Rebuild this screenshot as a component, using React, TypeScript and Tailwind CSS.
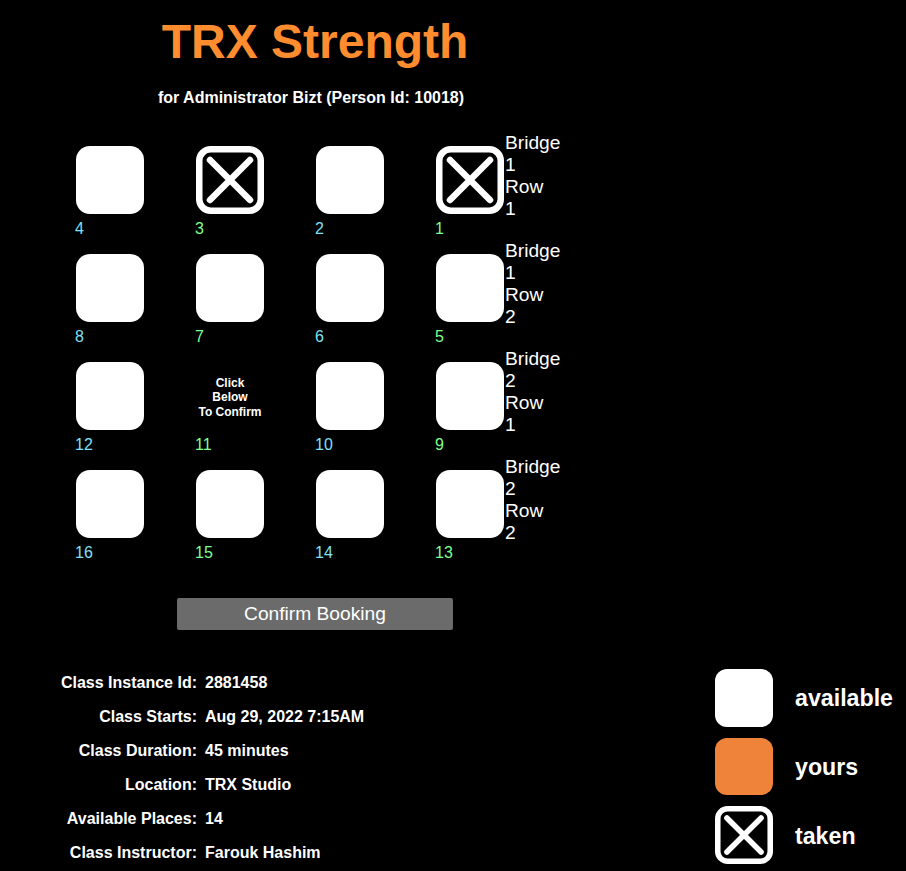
const rows = [
  { label: ["Bridge", "1", "Row", "1"], seats: [4, 3, 2, 1] },
  { label: ["Bridge", "1", "Row", "2"], seats: [8, 7, 6, 5] },
  { label: ["Bridge", "2", "Row", "1"], seats: [12, 11, 10, 9] },
  { label: ["Bridge", "2", "Row", "2"], seats: [16, 15, 14, 13] },
];

const taken = [3, 1];
const selected = 11;

const details = [
  ["Class Instance Id:", "2881458"],
  ["Class Starts:", "Aug 29, 2022 7:15AM"],
  ["Class Duration:", "45 minutes"],
  ["Location:", "TRX Studio"],
  ["Available Places:", "14"],
  ["Class Instructor:", "Farouk Hashim"],
];

function TakenBox({ size }: { size: number }) {
  return (
    <svg viewBox="0 0 68 68" width={size} height={size} className="block" fill="none" stroke="#fff">
      <rect x="3.25" y="3.25" width="61.5" height="61.5" rx="11.5" strokeWidth="6.5" />
      <path d="M14 14 L54 54 M54 14 L14 54" strokeWidth="6.5" strokeLinecap="round" />
    </svg>
  );
}

function Seat({ n }: { n: number }) {
  const color = n % 2 === 0 ? "text-[#7fe0f5]" : "text-[#7fff8f]";
  return (
    <div className="w-[120px] h-[108px] pl-[25px]">
      <div className="w-[68px] h-[68px] ml-px">
        {taken.includes(n) ? (
          <TakenBox size={68} />
        ) : n === selected ? (
          <div className="h-full pt-[3px] flex flex-col items-center justify-center text-xs leading-[14.5px] font-bold text-white">
            <span>Click</span>
            <span>Below</span>
            <span className="whitespace-nowrap">To Confirm</span>
          </div>
        ) : (
          <div className="h-full rounded-[14px] bg-white" />
        )}
      </div>
      <div className={`mt-[5px] text-base leading-5 ${color}`}>{n}</div>
    </div>
  );
}

export default function App() {
  return (
    <div className="h-[871px] overflow-hidden bg-black text-white font-['Liberation_Sans',Arial,sans-serif]">
      <div className="flex">
        <div className="w-[630px] shrink-0">
          <h1 className="pt-[14px] text-center text-[48px] leading-[55px] font-bold text-[#ff8c2e]">TRX Strength</h1>
          <p className="mt-[21px] pr-2 text-center text-base leading-4 font-bold">for Administrator Bizt (Person Id: 10018)</p>
          <div className="mt-10 pl-[50px]">
            {rows.map((row) => (
              <div key={row.seats[0]} className="flex h-[108px]">
                {row.seats.map((n) => (
                  <Seat key={n} n={n} />
                ))}
                <div className="-ml-[25px] -mt-[14px] text-[19.2px] leading-[22px]">
                  {row.label.map((t, i) => (
                    <div key={i}>{t}</div>
                  ))}
                </div>
              </div>
            ))}
          </div>
          <div className="mt-5 flex justify-center">
            <button className="w-[276px] h-[32px] rounded-[2px] bg-[#6b6b6b] text-[19.2px] text-white">Confirm Booking</button>
          </div>
          <div className="mt-[45px] flex flex-col gap-[18px] text-base leading-4 font-bold">
            {details.map(([k, v]) => (
              <div key={k} className="flex">
                <div className="w-[197px] text-right">{k}</div>
                <div className="ml-2">{v}</div>
              </div>
            ))}
          </div>
        </div>
        <div className="ml-[85px] mt-[669px] flex flex-col gap-[11.25px]">
          <div className="flex items-center gap-[22px] h-[57.5px]">
            <div className="w-[58px] h-[57.5px] rounded-xl bg-white" />
            <span className="pt-0.5 text-[23.2px] font-bold">available</span>
          </div>
          <div className="flex items-center gap-[22px] h-[57.5px]">
            <div className="w-[58px] h-[57.5px] rounded-xl bg-[#f0833a]" />
            <span className="pt-0.5 text-[23.2px] font-bold">yours</span>
          </div>
          <div className="flex items-center gap-[22px] h-[57.5px]">
            <TakenBox size={58} />
            <span className="pt-0.5 text-[23.2px] font-bold">taken</span>
          </div>
        </div>
      </div>
    </div>
  );
}
